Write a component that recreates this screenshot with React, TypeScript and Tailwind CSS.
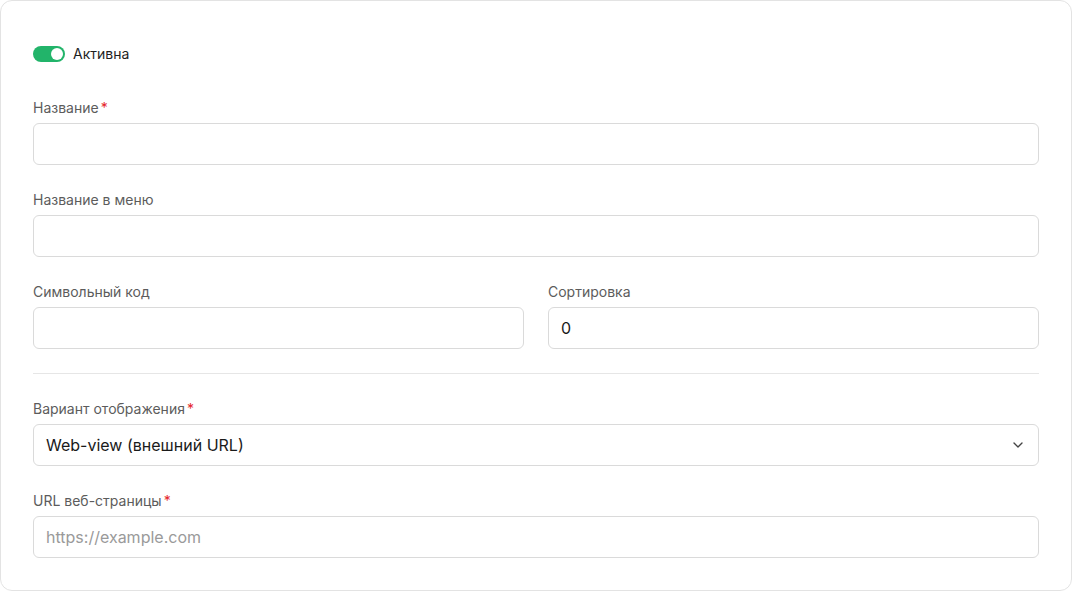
import React from "react";

function Label({ children, required }: { children: React.ReactNode; required?: boolean }) {
  return (
    <div className="mb-[5px] h-[21px] pt-px text-sm leading-5 text-[#5c5c5c] flex items-center">
      <span>{children}</span>
      {required && <span className="ml-0.5 text-[#e5262b]">*</span>}
    </div>
  );
}

function Input({ value, placeholder }: { value?: string; placeholder?: string }) {
  return (
    <input
      readOnly
      value={value ?? ""}
      placeholder={placeholder}
      className="block w-full h-[42px] rounded-md border border-[#dadada] bg-white px-3 text-base text-[#1a1a1a] placeholder:text-[#9a9a9a] outline-none"
    />
  );
}

export default function App() {
  return (
    <div className="w-[1072px] h-[591px] bg-white" style={{ fontFamily: "Inter, 'Noto Sans', sans-serif" }}>
      <div className="h-[591px] rounded-xl border border-[#e3e3e3] bg-white p-8 flex flex-col gap-6">
        <div className="h-10 pt-px flex items-center gap-2">
          <div className="relative w-8 h-4 rounded-full bg-[#22b46a]">
            <div className="absolute right-0.5 top-0.5 w-3 h-3 rounded-full bg-white" />
          </div>
          <span className="text-sm text-[#1f1f1f]">Активна</span>
        </div>
        <div>
          <Label required>Название</Label>
          <Input />
        </div>
        <div>
          <Label>Название в меню</Label>
          <Input />
        </div>
        <div className="grid grid-cols-2 gap-6">
          <div>
            <Label>Символьный код</Label>
            <Input />
          </div>
          <div>
            <Label>Сортировка</Label>
            <Input value="0" />
          </div>
        </div>
        <div className="h-px bg-[#e6e6e6]" />
        <div>
          <Label required>Вариант отображения</Label>
          <div className="h-[42px] rounded-md border border-[#dadada] bg-white px-3 flex items-center justify-between text-base text-[#1a1a1a]">
            <span>Web-view (внешний URL)</span>
            <svg width="16" height="16" viewBox="0 0 24 24" fill="none" stroke="#444" strokeWidth="2" strokeLinecap="round" strokeLinejoin="round">
              <path d="m6 9 6 6 6-6" />
            </svg>
          </div>
        </div>
        <div>
          <Label required>URL веб-страницы</Label>
          <Input placeholder="https://example.com" />
        </div>
      </div>
    </div>
  );
}
